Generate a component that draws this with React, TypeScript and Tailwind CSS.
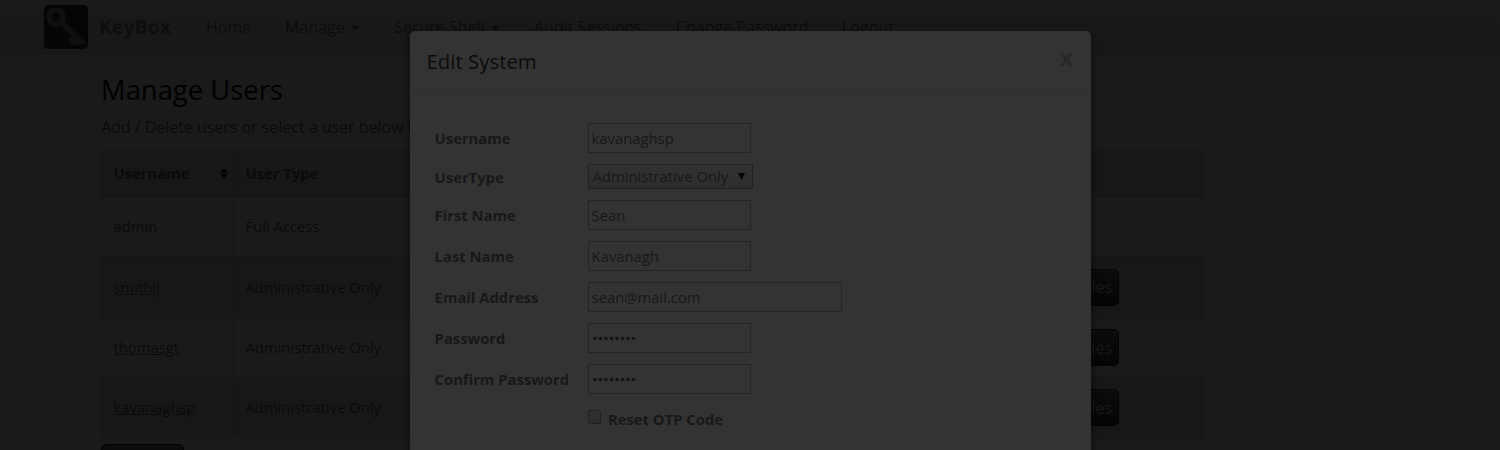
import React from "react";

const navItems = [
  { label: "Home", width: "w-[79px]", caret: false },
  { label: "Manage", width: "w-[109px]", caret: true },
  { label: "Secure Shell", width: "w-[140px]", caret: true },
  { label: "Audit Sessions", width: "w-[142px]", caret: false },
  { label: "Change Password", width: "w-[166px]", caret: false },
  { label: "Logout", width: "w-[80px]", caret: false },
];

const users = [
  { name: "admin", type: "Full Access", link: false, height: "h-[60px]", bg: "bg-[#1a1a1a]" },
  { name: "smithjl", type: "Administrative Only", link: true, height: "h-[61px]", bg: "bg-[#171717]" },
  { name: "thomasgt", type: "Administrative Only", link: true, height: "h-[60px]", bg: "bg-[#1a1a1a]" },
  { name: "kavanaghsp", type: "Administrative Only", link: true, height: "h-[60px]", bg: "bg-[#171717]" },
];

const inputBox =
  "flex h-[30px] items-center border border-[#242424] bg-[#333333] pl-[3px] text-[14.8px] text-[#171717]";

function Logo() {
  return (
    <svg width="44" height="44" viewBox="0 0 44 44" className="mt-[5px] shrink-0">
      <rect width="44" height="44" rx="4.5" fill="#050505" />
      <circle cx="12" cy="12" r="7.2" fill="none" stroke="#101010" strokeWidth="5.4" />
      <path d="M16 19.5 L19.5 16 L42 37.6 L39.6 40 L37.6 38.6 L35.6 41.6 L33.2 39.4 L31.2 41.4 L24 34.6 L27.6 31.2 Z" fill="#101010" />
    </svg>
  );
}

function Navbar() {
  return (
    <nav className="flex h-[55px] border-b border-[#171717] bg-gradient-to-b from-[#1a1a1a] to-[#171717] pl-[44px]">
      <Logo />
      <div className="ml-[11px] w-[107px] text-[19.5px] leading-[54px] font-bold text-[#0e0e0e]">KeyBox</div>
      {navItems.map((item) => (
        <div key={item.label} className={`flex shrink-0 items-center text-[16px] leading-[54px] whitespace-nowrap text-[#0c0c0c] ${item.width}`}>
          {item.label}
          {item.caret && (
            <svg width="9" height="5" viewBox="0 0 9 5" className="mt-[3px] ml-[6px]">
              <path d="M0 0 H9 L4.5 4.6 Z" fill="#0a0a0a" />
            </svg>
          )}
        </div>
      ))}
    </nav>
  );
}

function UsersTable() {
  return (
    <div className="mt-[12px] w-[1104px] border-x border-t border-[#161616] text-[14.8px] text-[#0a0a0a]">
      <div className="flex h-[46px] items-stretch border-b-2 border-[#151515] bg-[#171717] font-bold">
        <div className="flex w-[132px] items-center justify-between border-r border-[#151515] pr-[5px] pl-[11.5px]">
          Username
          <svg width="8" height="10" viewBox="0 0 8 10">
            <path d="M0 4.4 L4 0 L8 4.4 Z M0 5.6 L4 10 L8 5.6 Z" fill="#000000" />
          </svg>
        </div>
        <div className="flex w-[164px] items-center pl-[11.5px]">User Type</div>
      </div>
      {users.map((u) => (
        <div key={u.name} className={`flex border-b border-[#151515] ${u.height} ${u.bg}`}>
          <div className="flex w-[132px] items-center border-r border-[#151515] pl-[11.5px]">
            <span className={u.link ? "underline" : ""}>{u.name}</span>
          </div>
          <div className="flex w-[164px] items-center border-r border-[#181818] pl-[11.5px]">{u.type}</div>
          <div className="flex grow items-center justify-end pr-[85px]">
            {u.link && (
              <div className="flex h-[37px] w-[136px] items-center justify-end rounded-[5px] border border-[#030303] bg-gradient-to-b from-[#0c0c0c] to-[#050505] pr-[6px] text-[16px] text-[#1a1a1a]">
                Assign Profiles
              </div>
            )}
          </div>
        </div>
      ))}
    </div>
  );
}

function Row({ label, children }: { label: string; children: React.ReactNode }) {
  return (
    <div className="flex items-center">
      <div className="w-[153px] shrink-0 text-[14.8px] leading-[20px] font-bold whitespace-nowrap text-[#171717]">{label}</div>
      {children}
    </div>
  );
}

function Dots() {
  return (
    <svg width="44" height="6" viewBox="0 0 44 6" className="mb-[1px] ml-[1px]" fill="#131313">
      {[0, 1, 2, 3, 4, 5, 6, 7].map((i) => (
        <circle key={i} cx={2 + i * 5.5} cy="3.5" r="1.8" />
      ))}
    </svg>
  );
}

function EditModal() {
  return (
    <div className="absolute top-[31px] left-[410px] h-[440px] w-[681px] rounded-t-[5px] bg-[#333333] shadow-[0_3px_9px_rgba(0,0,0,0.5)]">
      <div className="flex h-[63px] justify-between border-b border-[#2e2e2e] pr-[18px] pl-[16.5px]">
        <h2 className="text-[20.4px] leading-[60px] text-[#0a0a0a]">Edit System</h2>
        <span className="text-[23px] leading-[53px] font-bold text-[#282828]">x</span>
      </div>
      <div className="flex flex-col gap-[11px] pt-[29px] pl-[24.6px]">
        <Row label="Username"><div className={`w-[163px] ${inputBox}`}>kavanaghsp</div></Row>
        <Row label="UserType">
          <div className="flex h-[25px] w-[165px] items-center justify-between rounded-[1px] border border-[#222222] bg-gradient-to-b from-[#323232] to-[#2d2d2d] pr-[7px] pl-[4px] text-[14.8px] whitespace-nowrap text-[#171717]">
            Administrative Only
            <svg width="7" height="7" viewBox="0 0 7 7" className="mb-[1px] shrink-0"><path d="M0 0 H7 L3.5 7 Z" fill="#000000" /></svg>
          </div>
        </Row>
        <Row label="First Name"><div className={`w-[163px] ${inputBox}`}>Sean</div></Row>
        <Row label="Last Name"><div className={`w-[163px] ${inputBox}`}>Kavanagh</div></Row>
        <Row label="Email Address"><div className={`w-[254px] ${inputBox}`}>sean@mail.com</div></Row>
        <Row label="Password"><div className={`w-[163px] ${inputBox}`}><Dots /></div></Row>
        <Row label="Confirm Password"><div className={`w-[163px] ${inputBox}`}><Dots /></div></Row>
      </div>
      <div className="mt-[15px] flex items-start pl-[178px]">
        <div className="mt-[1px] h-[14px] w-[13px] rounded-[2px] border border-[#222222] bg-gradient-to-b from-[#303030] to-[#2c2c2c]" />
        <div className="ml-[7px] text-[14.8px] leading-[20px] font-bold text-[#171717]">Reset OTP Code</div>
      </div>
    </div>
  );
}

export default function App() {
  return (
    <div className="relative h-[450px] w-[1500px] overflow-hidden bg-[#1a1a1a] font-['Open_Sans',sans-serif]">
      <Navbar />
      <main className="pl-[101px]">
        <h1 className="pt-[18px] text-[27.4px] leading-[34px] text-[#000000]">Manage Users</h1>
        <p className="mt-[9px] text-[16px] leading-[22px] tracking-[-0.03px] text-[#0a0a0a]">
          Add / Delete users or select a user below to set profile
        </p>
        <UsersTable />
        <div className="mt-[6px] flex h-[37px] w-[83px] items-center justify-center rounded-[5px] border border-[#020202] bg-gradient-to-b from-[#0c0c0c] to-[#050505] text-[16px] text-[#1a1a1a]">
          Add User
        </div>
      </main>
      <EditModal />
    </div>
  );
}
